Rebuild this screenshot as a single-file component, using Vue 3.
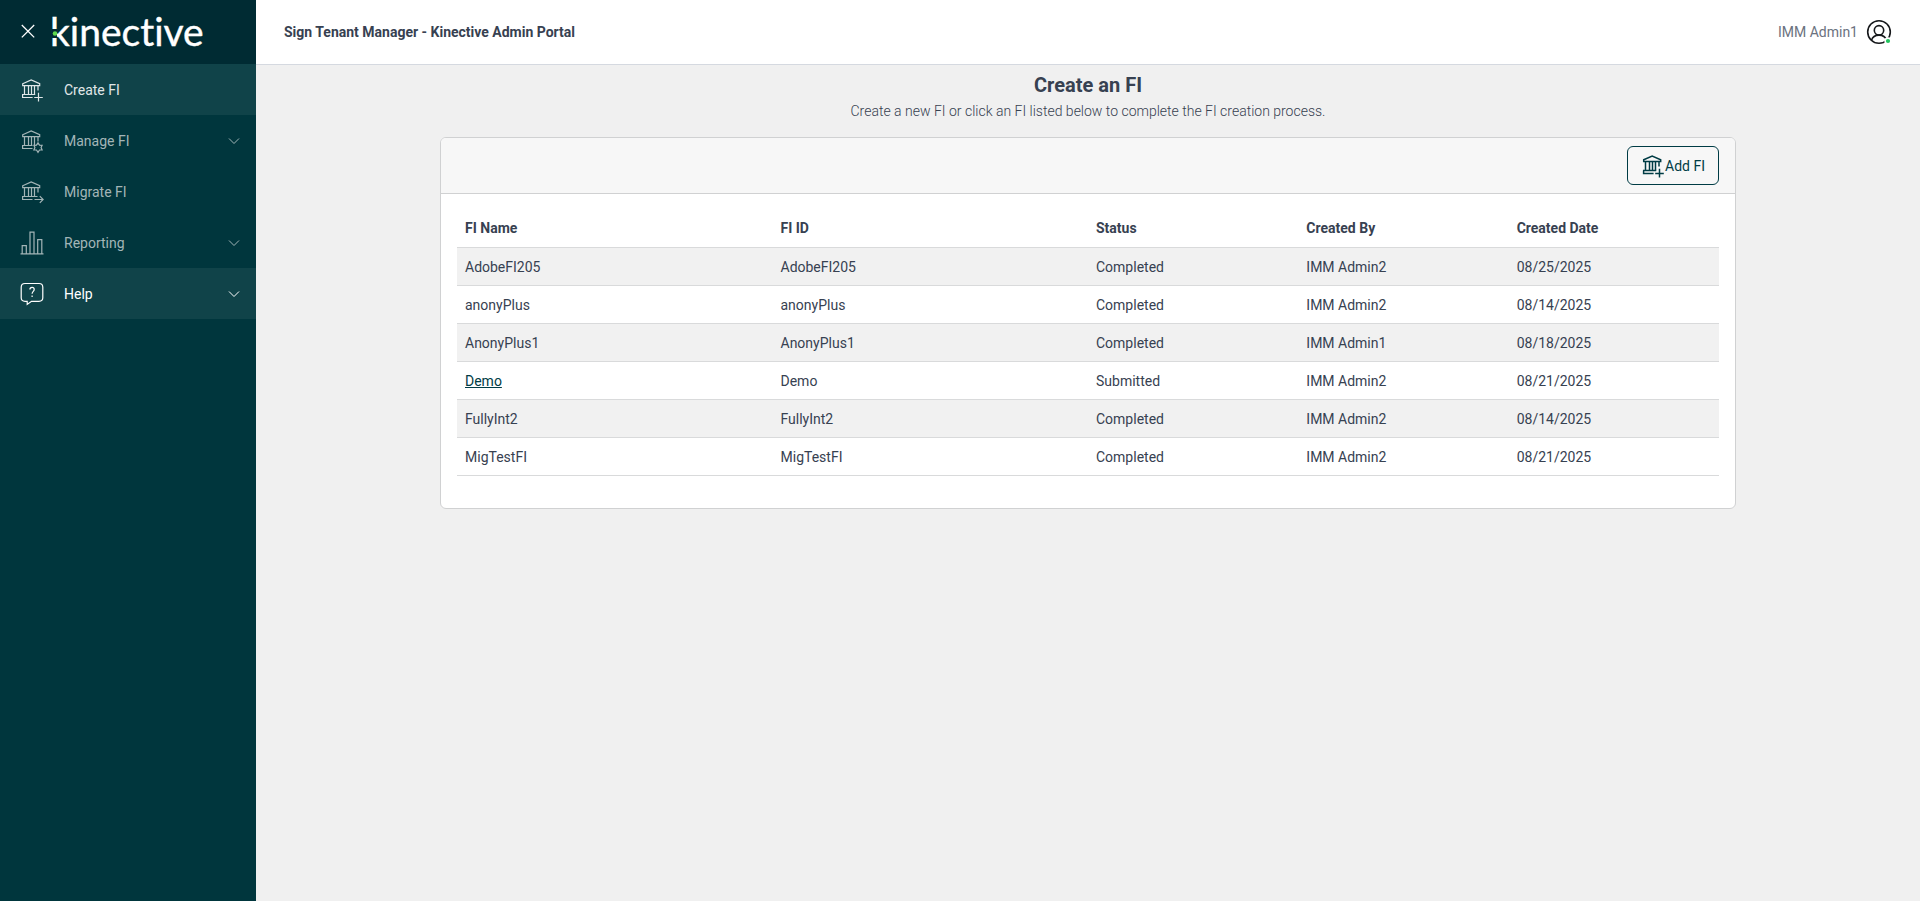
<script setup>
const navItems = [
  { label: 'Create FI', icon: 'plus', active: true },
  { label: 'Manage FI', icon: 'gear', expandable: true },
  { label: 'Migrate FI', icon: 'arrow' },
  { label: 'Reporting', icon: 'chart', expandable: true },
  { label: 'Help', icon: 'help', expandable: true, active: true, bright: true },
]

const columns = ['FI Name', 'FI ID', 'Status', 'Created By', 'Created Date']

const institutions = [
  { name: 'AdobeFI205', status: 'Completed', by: 'IMM Admin2', date: '08/25/2025' },
  { name: 'anonyPlus', status: 'Completed', by: 'IMM Admin2', date: '08/14/2025' },
  { name: 'AnonyPlus1', status: 'Completed', by: 'IMM Admin1', date: '08/18/2025' },
  { name: 'Demo', status: 'Submitted', by: 'IMM Admin2', date: '08/21/2025', link: true },
  { name: 'FullyInt2', status: 'Completed', by: 'IMM Admin2', date: '08/14/2025' },
  { name: 'MigTestFI', status: 'Completed', by: 'IMM Admin2', date: '08/21/2025' },
]
</script>

<template>
  <svg class="sprite" aria-hidden="true">
    <defs>
      <g id="bank">
        <path d="M2.7 6.7 11.2 3 19.7 6.7V8.6H2.7Z" />
        <path d="M4.5 9V17.5M8.5 9V17.5M11.5 9V17.5M14.5 9V17.5M18 9V13.5" />
      </g>
      <g id="bank-plus">
        <use href="#bank" />
        <path d="M2 17.5H15.2M2.6 17.5V20.5H12.6M18.5 15.8V24.5M14.2 20.5H22.8" />
      </g>
    </defs>
  </svg>

  <div class="layout">
    <aside class="sidebar">
      <div class="brand">
        <button class="close" type="button" aria-label="Close menu">
          <svg width="16" height="16" viewBox="0 0 16 16" fill="none" stroke="currentColor" stroke-width="1.3">
            <path d="M1.8 1 14.2 13.4M14.2 1 1.8 13.4" />
          </svg>
        </button>
        <a class="logo" href="#" aria-label="kinective home">
          <svg width="168" height="52" viewBox="0 0 168 52">
            <text class="wordmark" x="0" y="40">kinective</text>
            <rect x="2" y="23" width="5" height="9" fill="#002b33" />
            <circle cx="5" cy="27.5" r="2.3" fill="#5fd94f" />
          </svg>
        </a>
      </div>
      <nav aria-label="Main">
        <a
          v-for="item in navItems"
          :key="item.label"
          href="#"
          class="nav-item"
          :class="{ active: item.active, bright: item.bright }"
        >
          <svg class="nav-icon" width="24" height="26" viewBox="0 0 24 26" fill="none" stroke="currentColor" stroke-width="1.2">
            <template v-if="item.icon === 'chart'">
              <path d="M.5 23.8H23.5M2.2 23.5V15.7H6.3V23.5M10 23.5V2.2H14V23.5M17.7 23.5V9.7H21.8V23.5" />
            </template>
            <template v-else-if="item.icon === 'help'">
              <path d="M5 2.5H19Q22.8 2.5 22.8 6.3V16.8Q22.8 20.3 19 20.3H11.5L7.2 23.4V20.3H5Q1.2 20.3 1.2 16.8V6.3Q1.2 2.5 5 2.5Z" />
              <path d="M9.9 8.6Q9.9 6.4 12.1 6.4 14.2 6.4 14.2 8.4C14.2 10.4 12.1 10.3 12.1 12.8M12.1 14.4V16" />
            </template>
            <use v-else-if="item.icon === 'plus'" href="#bank-plus" />
            <template v-else>
              <use href="#bank" />
              <template v-if="item.icon === 'gear'">
                <path d="M2 17.5H12.5M2.6 17.5V20.5H12.5" />
                <path d="M18 14.9 19.5 17.2 22.1 17.3 21.1 19.6 22.1 21.9 19.5 22 18 24.3 16.5 22 13.9 21.9 14.9 19.6 13.9 17.3 16.5 17.2Z" />
              </template>
              <path v-else d="M2 17.5H17.5M2.6 17.5V20.5H12.5M14.5 20.5H23M19.8 17.2 23.1 20.5 19.8 23.8" />
            </template>
          </svg>
          <span class="nav-label">{{ item.label }}</span>
          <svg v-if="item.expandable" class="chevron" width="12" height="8" viewBox="0 0 12 8" fill="none" stroke="currentColor" stroke-width="1">
            <path d="M1 1.5 6 6.5 11 1.5" />
          </svg>
        </a>
      </nav>
    </aside>

    <div class="page">
      <header class="topbar">
        <h1>Sign Tenant Manager - Kinective Admin Portal</h1>
        <button class="user" type="button">
          <span>IMM Admin1</span>
          <svg width="26" height="26" viewBox="0 0 26 26" fill="none" stroke="#16181b" stroke-width="1.6">
            <circle cx="13" cy="13" r="11.3" />
            <circle cx="13" cy="11.3" r="4.7" />
            <path d="M5.5 21.3C6.5 17.8 9.5 16.1 13 16.1S19.5 17.8 20.5 21.3" />
            <circle cx="22" cy="22" r="2.9" fill="#22c55e" stroke="#fff" />
          </svg>
        </button>
      </header>

      <main class="content">
        <h2>Create an FI</h2>
        <p class="intro">Create a new FI or click an FI listed below to complete the FI creation process.</p>

        <section class="card">
          <div class="card-header">
            <button class="add" type="button">
              <svg width="24" height="26" viewBox="0 0 24 26" fill="none" stroke="currentColor" stroke-width="1.5">
                <use href="#bank-plus" />
              </svg>
              <span>Add FI</span>
            </button>
          </div>
          <div class="card-body">
            <table>
              <thead>
                <tr>
                  <th v-for="column in columns" :key="column" scope="col">{{ column }}</th>
                </tr>
              </thead>
              <tbody>
                <tr v-for="row in institutions" :key="row.name">
                  <td>
                    <a v-if="row.link" href="#">{{ row.name }}</a>
                    <template v-else>{{ row.name }}</template>
                  </td>
                  <td>{{ row.name }}</td>
                  <td>{{ row.status }}</td>
                  <td>{{ row.by }}</td>
                  <td>{{ row.date }}</td>
                </tr>
              </tbody>
            </table>
          </div>
        </section>
      </main>
    </div>
  </div>
</template>

<style>
body {
  margin: 0;
  background: #f0f0f0;
}
</style>

<style scoped>
.sprite {
  position: absolute;
  width: 0;
  height: 0;
}
.layout {
  display: flex;
  min-height: 100vh;
  font-family: Roboto, "Liberation Sans", sans-serif;
  font-size: 14px;
  line-height: 21px;
  color: #374151;
}
button {
  font: inherit;
  cursor: pointer;
}
.sidebar {
  flex: 0 0 256px;
  background: #00363d;
}
.brand {
  display: flex;
  align-items: center;
  gap: 14px;
  height: 64px;
  padding-left: 20px;
  background: #002b33;
}
.close {
  display: flex;
  padding: 0;
  border: 0;
  background: none;
  color: #fff;
}
.logo {
  display: flex;
}
.wordmark {
  font-family: Lato, sans-serif;
  font-size: 39px;
  font-variant-ligatures: none;
  fill: #fff;
  stroke: #fff;
  stroke-width: 0.4;
}
.nav-item {
  display: flex;
  align-items: center;
  height: 51px;
  padding: 0 16px 0 20px;
  box-sizing: border-box;
  color: #a3b5b7;
  text-decoration: none;
}
.nav-item.active {
  background: #104349;
  color: #e0e7e8;
}
.nav-item.bright {
  color: #fff;
}
.nav-label {
  flex: 1;
  margin-left: 20px;
  padding-top: 2px;
}
.page {
  flex: 1;
  min-width: 0;
}
.topbar {
  display: flex;
  align-items: center;
  justify-content: space-between;
  height: 64px;
  padding: 0 28px;
  border-bottom: 1px solid #d5d9e0;
  background: #fff;
}
h1 {
  margin: 0;
  font-size: 14px;
  font-weight: 700;
}
.user {
  display: flex;
  align-items: center;
  gap: 8px;
  padding: 0;
  border: 0;
  background: none;
  color: #6b7280;
}
.content {
  max-width: 1296px;
  margin: 0 auto;
  padding: 8px 12px;
}
h2 {
  margin: 0;
  font-size: 20px;
  line-height: 24px;
  font-weight: 700;
  text-align: center;
}
.intro {
  margin: 4px 0 15px;
  font-weight: 300;
  text-align: center;
}
.card {
  border: 1px solid #d0d1d2;
  border-radius: 6px;
  background: #fff;
  overflow: hidden;
}
.card-header {
  display: flex;
  justify-content: flex-end;
  padding: 8px 16px;
  border-bottom: 1px solid #d0d1d2;
  background: #f7f7f7;
}
.add {
  display: flex;
  align-items: center;
  height: 39px;
  padding: 0 13px;
  border: 1px solid #003c45;
  border-radius: 6px;
  background: none;
  color: #003c45;
}
.add span {
  padding-top: 2px;
}
.card-body {
  padding: 16px 16px 32px;
}
table {
  width: 100%;
  table-layout: fixed;
  border-collapse: separate;
  border-spacing: 0;
}
th,
td {
  padding: 8px;
  border-bottom: 1px solid #d9dadb;
  text-align: left;
}
td {
  padding: 9px 8px 7px;
}
th:nth-child(-n + 2) {
  width: 25%;
  box-sizing: border-box;
}
tbody tr:nth-child(odd) {
  background: #f1f1f1;
}
td a {
  color: #003c45;
}
</style>
